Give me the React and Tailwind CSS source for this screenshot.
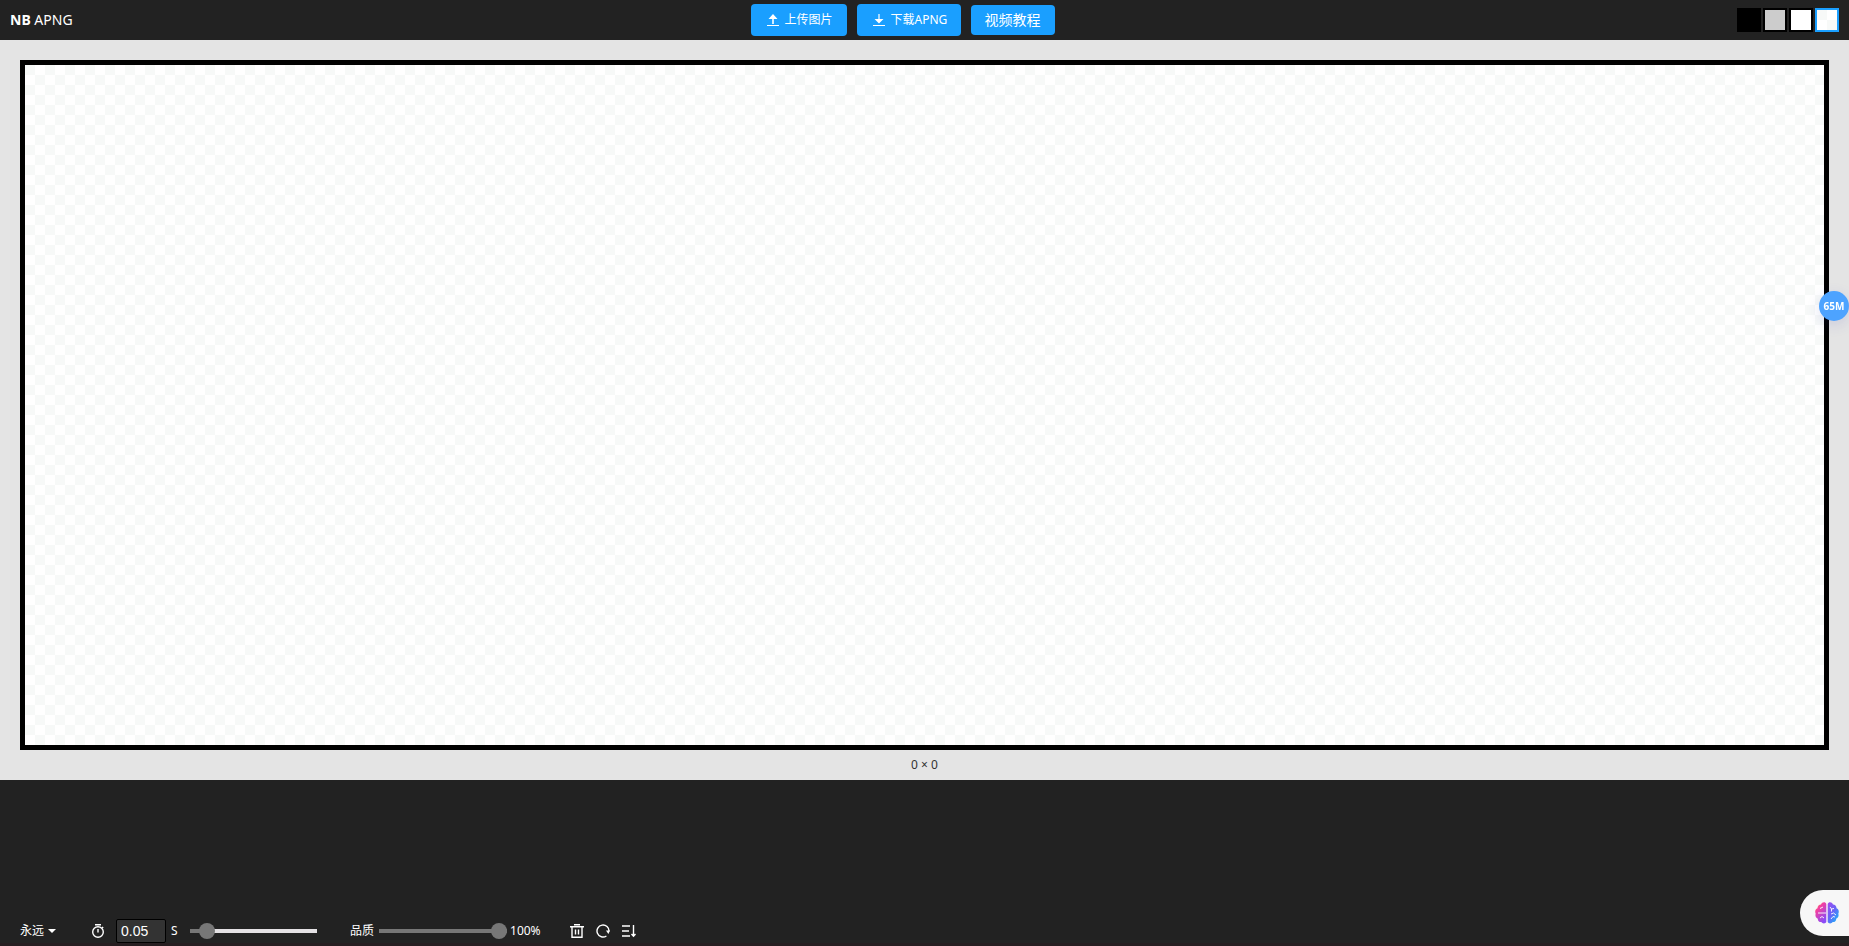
import { useState } from "react";

const CHECKER =
  "bg-[conic-gradient(#fff_25%,#f7f9f8_0_50%,#fff_0_75%,#f7f9f8_0)] bg-[length:20px_20px]";

const SWATCHES = [
  { name: "黑色", style: "bg-black border-black" },
  { name: "灰色", style: "bg-[#ccc] border-black" },
  { name: "白色", style: "bg-white border-black" },
  { name: "透明", style: "border-[#1a9fff] " + CHECKER },
];

const TRACK =
  "appearance-none bg-transparent h-4 [&::-webkit-slider-runnable-track]:h-1 [&::-webkit-slider-thumb]:appearance-none [&::-webkit-slider-thumb]:size-4 [&::-webkit-slider-thumb]:rounded-full [&::-webkit-slider-thumb]:bg-[#777] [&::-webkit-slider-thumb]:-mt-1.5";

function UploadIcon() {
  return (
    <svg className="size-3" viewBox="0 0 12 12" fill="currentColor" aria-hidden="true">
      <path d="M6 0 10.5 5H6.800v5H5.200V5H1.500z" />
      <path d="M0 11h12v1H0z" />
    </svg>
  );
}

function DownloadIcon() {
  return (
    <svg className="size-3" viewBox="0 0 12 12" fill="currentColor" aria-hidden="true">
      <path d="M5.4 0h1.2v5h3.9L6 9.6 1.5 5h3.9z" />
      <path d="M0 11h12v1H0z" />
    </svg>
  );
}

function Header() {
  const [active, setActive] = useState(3);
  return (
    <header className="grid h-10 grid-cols-[1fr_auto_1fr] items-center bg-[#222] px-2.5">
      <h1 className="text-sm text-white">
        <b>NB</b> APNG
      </h1>
      <div className="mr-11 flex items-center gap-2.5 text-white">
        <button className="flex h-8 w-24 items-center gap-1.5 rounded bg-[#1a9fff] pl-4 text-xs">
          <UploadIcon />
          上传图片
        </button>
        <button className="flex h-8 w-26 items-center gap-1.5 rounded bg-[#1a9fff] pl-4 text-xs whitespace-nowrap">
          <DownloadIcon />
          下载APNG
        </button>
        <a href="#tutorial" className="flex h-[30px] w-21 items-center justify-center rounded bg-[#1a9fff] text-sm">
          视频教程
        </a>
      </div>
      <div className="flex justify-end gap-0.5">
        {SWATCHES.map((s, i) => (
          <button
            key={s.name}
            aria-label={s.name}
            aria-pressed={i === active}
            onClick={() => setActive(i)}
            className={"size-6 border-2 " + s.style}
          />
        ))}
      </div>
    </header>
  );
}

function Toolbar() {
  const [delay, setDelay] = useState("0.05");
  const [quality, setQuality] = useState(100);
  return (
    <div className="flex h-6 items-center px-5 text-xs text-white">
      <button className="flex w-[71px] items-center gap-1">
        永远
        <span className="border-x-4 border-t-4 border-x-transparent border-t-white" />
      </button>
      <label htmlFor="delay" aria-label="间隔">
        <svg className="size-[14px]" viewBox="0 0 14 14" fill="none" stroke="currentColor" strokeWidth="1.4" aria-hidden="true">
          <path d="M4 .7h6M7 5v3.4M11 3l1.2 1" />
          <circle cx="7" cy="8" r="5.3" />
        </svg>
      </label>
      <input
        id="delay"
        value={delay}
        onChange={(e) => setDelay(e.target.value)}
        className="ml-[11px] h-6 w-[50px] rounded-xs border border-black bg-[#333] px-1 font-['Liberation_Sans',sans-serif] text-sm"
      />
      <span className="ml-[5px] w-[19px]">S</span>
      <input
        type="range"
        aria-label="间隔时间"
        min="0.01"
        max="0.5"
        step="0.01"
        value={delay}
        onChange={(e) => setDelay(e.target.value)}
        className={"w-[127px] [&::-webkit-slider-runnable-track]:bg-[linear-gradient(90deg,#777_17px,#e4e1e4_17px)] " + TRACK}
      />
      <label htmlFor="quality" className="ml-[33px]">
        品质
      </label>
      <input
        id="quality"
        type="range"
        value={quality}
        onChange={(e) => setQuality(e.target.value)}
        className={"ml-[5px] w-32 [&::-webkit-slider-runnable-track]:bg-[#777] " + TRACK}
      />
      <output htmlFor="quality" className="ml-[3px] w-15">
        {quality}%
      </output>
      <div className="flex items-center gap-3">
        <button aria-label="删除">
          <svg className="size-[14px]" viewBox="0 0 14 14" fill="none" stroke="currentColor" strokeWidth="1.4" aria-hidden="true">
            <path d="M4 .7h6M0 2.7h14M2 3v10.3h10V3M5.5 5.5v5M8.5 5.5v5" />
          </svg>
        </button>
        <button aria-label="循环">
          <svg className="size-[14px]" viewBox="0 0 14 14" fill="none" stroke="currentColor" strokeWidth="1.4" aria-hidden="true">
            <path d="M10.4 12A6 6 0 1 1 13 7.4" />
            <path d="M10 6.5h4L12.4 10z" fill="currentColor" stroke="none" />
          </svg>
        </button>
        <button aria-label="排序">
          <svg className="size-[14px]" viewBox="0 0 14 14" fill="none" stroke="currentColor" strokeWidth="1.4" aria-hidden="true">
            <path d="M0 2h8M0 7h7M0 12h8M11.5 1v11M9.500 10l2 2.300L13.500 10" />
          </svg>
        </button>
      </div>
    </div>
  );
}

function BrainIcon() {
  return (
    <svg className="h-6 w-6" viewBox="0 0 24 24" aria-hidden="true">
      <defs>
        <linearGradient id="left" x1="0" y1="0" x2="0.6" y2="1">
          <stop offset="0" stopColor="#ff9a2e" />
          <stop offset="0.35" stopColor="#f43fa0" />
          <stop offset="1" stopColor="#8b4cf6" />
        </linearGradient>
        <linearGradient id="right" x1="0" y1="0" x2="0.8" y2="1">
          <stop offset="0" stopColor="#a24cf0" />
          <stop offset="0.5" stopColor="#6a63f6" />
          <stop offset="1" stopColor="#16b5fa" />
        </linearGradient>
      </defs>
      <path fill="url(#left)" d="M11.3 3v18c-.7 1.8-3.9 1.9-5 0-2 .2-3.600-1.300-3.500-3.300C.6 16.700 0 14.500.7 12.700-.4 10.500.4 8 2.500 7.200 2.400 5 4 3.400 6 3.400 7 .6 10.600.4 11.300 3z" />
      <path fill="url(#right)" d="M12.700 3v18c.7 1.800 3.900 1.900 5 0 2 .2 3.600-1.300 3.500-3.300 2.200-1 2.800-3.200 2.100-5 1.100-2.200.3-4.700-1.800-5.500.1-2.200-1.500-3.800-3.500-3.800-1-2.800-4.600-3-5.300-.4z" />
      <path fill="none" stroke="#fff" strokeWidth="0.9" d="M3 12h8M5 7.500l3-1.500M5 17l2-1.500 2 1.500M15 6l1.500 2L19 7.500M16.500 8v2.500M16 13l2.500-1 2.500 2M16 18l2-2.500 2 .5" />
    </svg>
  );
}

export default function App() {
  return (
    <div className="flex h-screen flex-col bg-[#222] font-['Noto_Sans','Noto_Sans_CJK_SC',sans-serif]">
      <Header />
      <main className="flex flex-1 flex-col bg-[#e4e4e4] px-5 pt-5">
        <div className={"flex-1 border-5 border-black " + CHECKER} />
        <p className="h-[30px] text-center text-xs leading-[30px] text-[#333]">0 × 0</p>
      </main>
      <footer className="flex h-[166px] flex-col justify-end border-b-3 border-[#261d20]">
        <Toolbar />
      </footer>
      <button className="fixed top-[291px] right-0 size-[30px] rounded-full bg-[#4da3ff] font-['Open_Sans',sans-serif] text-[10px] font-bold text-white shadow-[0_4px_14px_rgba(60,70,180,0.15)]">
        65M
      </button>
      <button aria-label="助手" className="fixed right-0 bottom-[10px] flex h-[46px] w-[49px] items-center rounded-l-full bg-[#f7f7f7] pl-[15px]">
        <BrainIcon />
      </button>
    </div>
  );
}
